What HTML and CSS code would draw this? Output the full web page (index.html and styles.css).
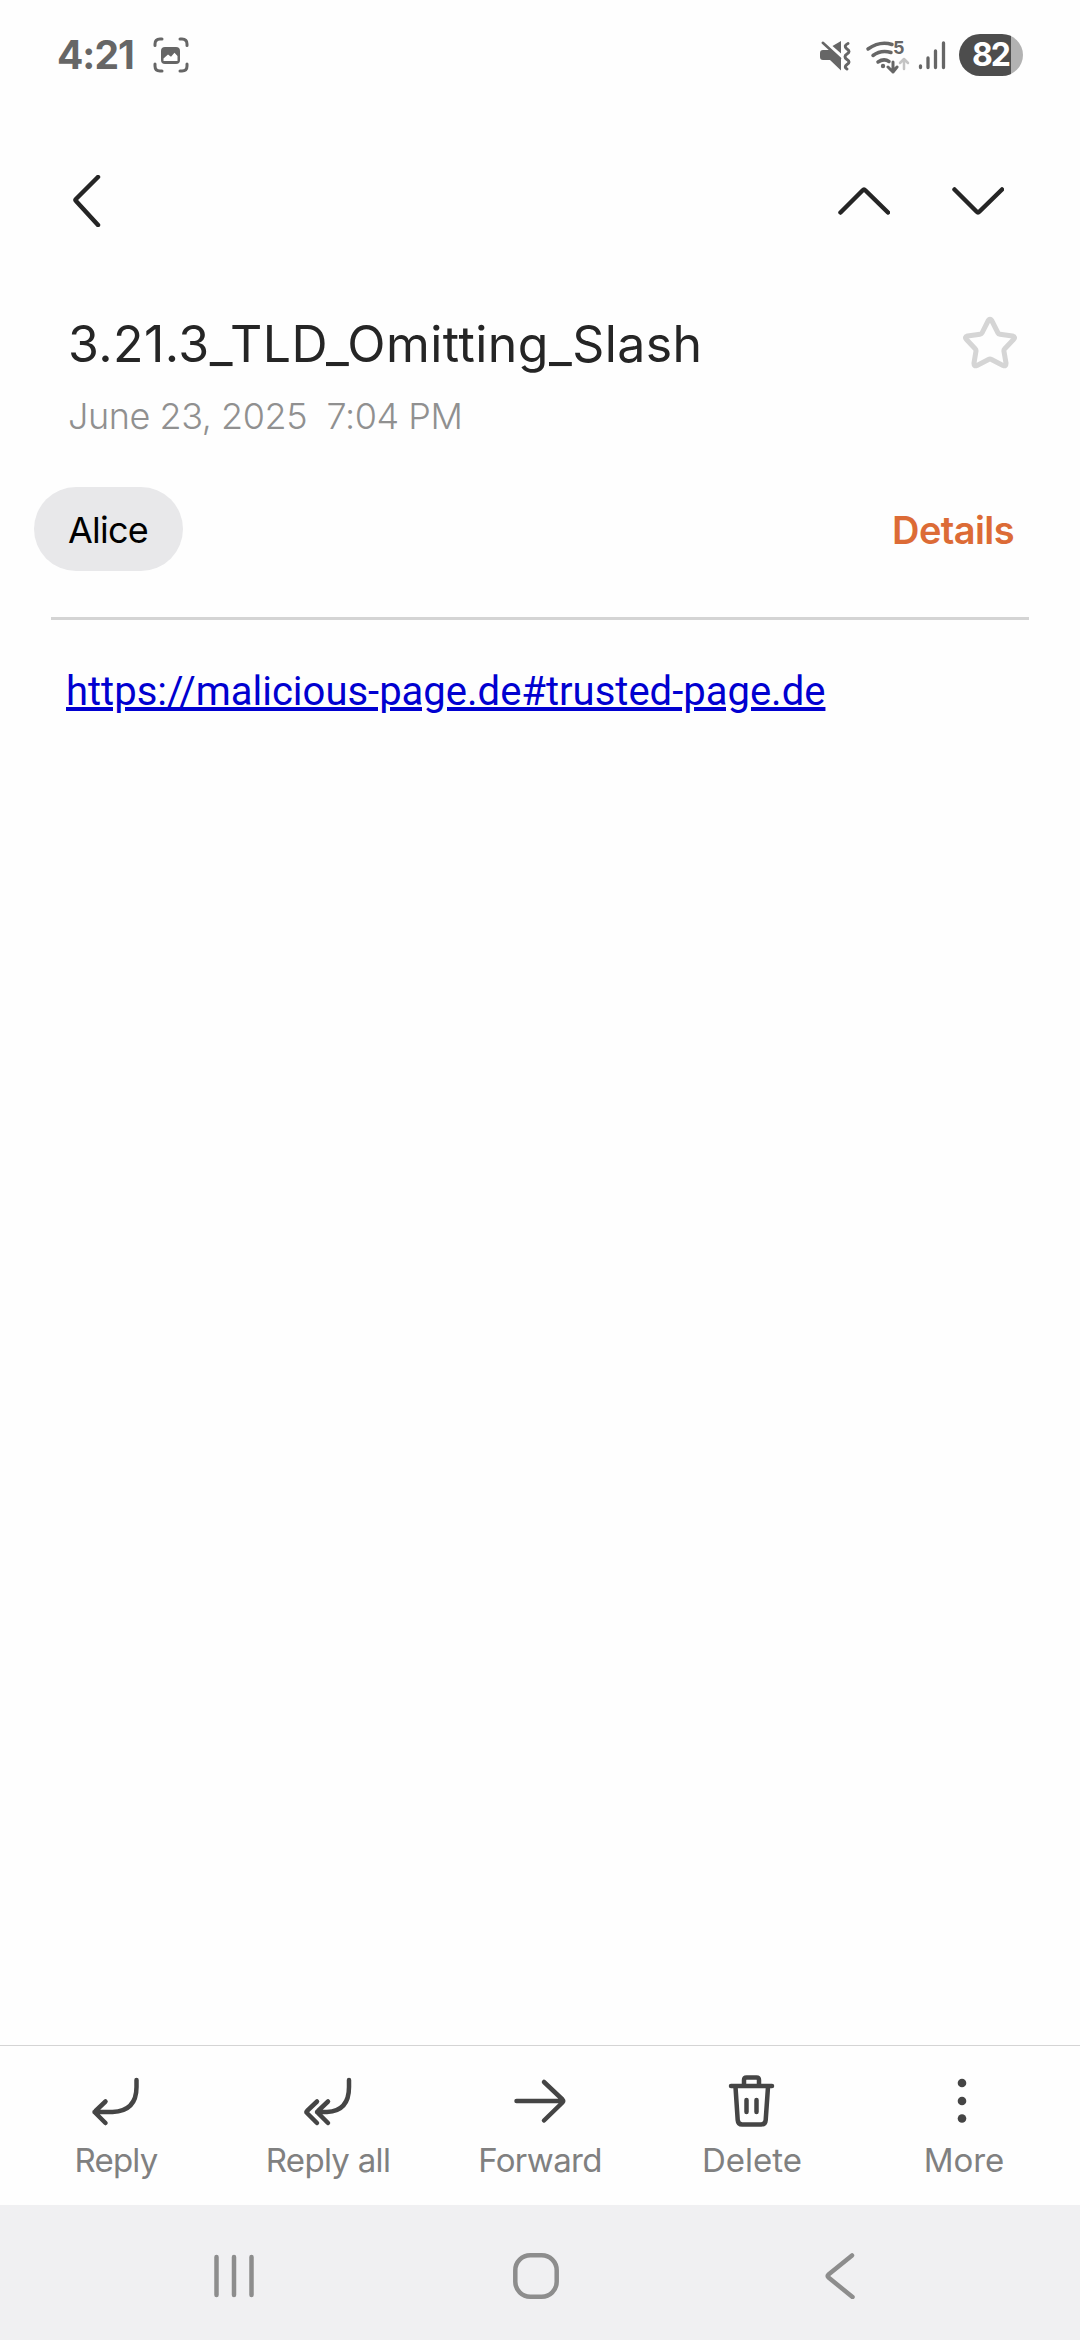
FILE: index.html
```html
<!DOCTYPE html>
<html lang="en">
<head>
<meta charset="utf-8">
<title>3.21.3_TLD_Omitting_Slash</title>
<link rel="stylesheet" href="styles.css">
</head>
<body>
<div class="screen">
  <header class="status">
    <div class="status-left">
      <span class="clock">4:21</span>
      <svg class="capture" width="36" height="36" viewBox="0 0 36 36" fill="none" stroke="#666" stroke-width="3" stroke-linecap="round">
        <path d="M2 8.500V7Q2 2 7 2H9M27 2h2q5 0 5 5v1.500M34 27v2q0 5-5 5h-2M9 34H7Q2 34 2 29v-2"/>
        <rect x="8" y="10" width="19" height="17" rx="4" fill="#666" stroke="none"/>
        <path d="M10.500 24v-2.500l4.500-4 3 2.200 3.500-4 3 3.300v5z" fill="#fff" stroke="none"/>
      </svg>
    </div>
    <div class="status-right">
      <svg width="130" height="36" viewBox="0 0 130 36" fill="none" stroke-linecap="round" stroke-linejoin="round">
        <g fill="#666"><path d="M3 12h6.500L21 20.500V32.500L10 22H3q-3 0-3-3v-4q0-3 3-3z"/><path d="M12.500 8 21 3v12.500z"/></g>
        <path d="M2.800 4.800 20 20.500" stroke="#666" stroke-width="2.600"/>
        <path d="M28 5.500q-5 2.500-1 5.500 4 2.500 0 5-4 2.500 0 5.500 4 2.500 0 5-3.500 2.500 0 4.500" stroke="#666" stroke-width="3"/>
        <path d="M48 11q12-8.500 24-4.500M53 17.500q8-6 18-3M58 24q6-4 11-.500" stroke="#666" stroke-width="3.500"/>
        <circle cx="63" cy="28" r="2.200" fill="#666"/>
        <path d="M73 24v10m-5-5 5 5 4-5" stroke="#666" stroke-width="3"/>
        <path d="M84 31V21m-4 4 4-4 4 4" stroke="#c4c4c4" stroke-width="2.500"/>
        <path d="M100.500 28v1.500M108 20v9.500M115.500 13v16.500M123.500 5v24.500" stroke="#666" stroke-width="3.300"/>
        <text class="band" x="73" y="15.500">5</text>
      </svg>
      <span class="battery">82</span>
    </div>
  </header>

  <nav class="topbar">
    <svg width="28" height="52" viewBox="0 0 28 52" class="chev"><path d="m25 2-22 22q-1 1 0 2L25 50"/></svg>
    <div class="pager">
      <svg width="52" height="28" viewBox="0 0 52 28" class="chev"><path d="M2.500 25.500 24.500 3.500Q26 2 27.500 3.500L50 25.500"/></svg>
      <svg width="52" height="28" viewBox="0 0 52 28" class="chev"><path d="m2.500 2.500 22 22Q26 26 27.500 24.500L50 2.500"/></svg>
    </div>
  </nav>

  <section class="subject">
    <div>
      <h1><span class="title">3.21.3_TLD_Omitting_Slash</span></h1>
      <p class="date">June 23, 2025&nbsp; 7:04 PM</p>
    </div>
    <svg class="star" width="54" height="54" viewBox="0 0 54 54" fill="none" stroke="#d5d5d5" stroke-width="5" stroke-linejoin="round"><path d="M25.300 4.500Q27 2 28.700 4.500L35 17q.500 1 2 1.200L49.500 20q3.500 1 1 3.500L41.500 33q-.700.700-.600 2L43 47q.200 3.800-3 2.500L28.500 43.500q-1.500-.800-3 0L14 49.500q-3.200 1.300-3-2.500L13 35q.100-1.300-.600-2L3.500 23.500q-2.500-2.500 1-3.500L17 18.200q1.500-.200 2-1.200z"/></svg>
  </section>

  <section class="people">
    <span class="chip"><span class="name">Alice</span></span>
    <span class="details">Details</span>
  </section>

  <main class="message"><a class="link" href="#">https://malicious-page.de#trusted-page.de</a></main>

  <footer class="actions">
    <div class="action">
      <svg width="56" height="60" viewBox="0 0 56 60"><path d="M48.500 10v7q0 24-24 25H6.500M17.500 31.500 7.500 41q-1 1 0 2l10 10"/></svg>
      <span class="reply">Reply</span>
    </div>
    <div class="action">
      <svg width="56" height="60" viewBox="0 0 56 60"><path d="M49 10v7q0 24-22 25H17M28 31.500 18 41q-1 1 0 2l10 10M17 31.500 7 41q-1 1 0 2l10 10"/></svg>
      <span class="reply-all">Reply all</span>
    </div>
    <div class="action">
      <svg width="56" height="60" viewBox="0 0 56 60"><path d="M4.500 31h46M32 12l18.500 17.500q1.500 1.500 0 3L32 50.500"/></svg>
      <span class="forward">Forward</span>
    </div>
    <div class="action">
      <svg width="56" height="60" viewBox="0 0 56 60"><path d="M7 16h41M20 15v-5q0-2.500 2.500-2.500h10Q35 7.500 35 10v5M11.500 17l2.200 33q.300 4.500 4.500 4.500h19q4.200 0 4.500-4.500L44 17M22.500 30v12M32.500 30v12"/></svg>
      <span class="delete">Delete</span>
    </div>
    <div class="action">
      <svg width="56" height="60" viewBox="0 0 56 60"><g class="dots"><circle cx="26" cy="13" r="4.300"/><circle cx="26" cy="31" r="4.300"/><circle cx="26" cy="48.500" r="4.300"/></g></svg>
      <span class="more">More</span>
    </div>
  </footer>

  <nav class="system">
    <svg width="42" height="46" viewBox="0 0 42 46"><path d="M3.500 4v38M21 4v38M38.500 4v38"/></svg>
    <svg class="home" width="46" height="46" viewBox="0 0 46 46"><rect x="2.300" y="2.300" width="41.400" height="41.400" rx="15"/></svg>
    <svg class="sysback" width="30" height="46" viewBox="0 0 30 46"><path d="M27 2.500 3.500 21.500q-1.500 1.500 0 3L27.500 44"/></svg>
  </nav>
</div>
</body>
</html>
```
FILE: styles.css
```css
* { box-sizing: border-box; }
body { margin: 0; background: #fefefe; font-family: Inter, "Noto Sans", sans-serif; }
.screen { width: 1080px; height: 2340px; display: flex; flex-direction: column; overflow: hidden; background: #fefefe; }
.screen svg { display: block; flex: none; }
.screen span { white-space: nowrap; }

.status { height: 110px; padding: 0 57px 0 57px; display: flex; justify-content: space-between; }
.status-left { display: flex; align-items: flex-start; }
.clock { width: 96px; padding-top: 32px; font-size: 39px; line-height: 46px; font-weight: 700; color: #666; letter-spacing: -1px; }
.capture { margin-top: 37px; }
.status-right { display: flex; gap: 9px; padding-top: 34px; }
.status-right svg { margin-top: 4px; }
.band { font: 700 18px Inter, sans-serif; fill: #666; stroke: none; }
.battery { width: 64px; height: 42px; border-radius: 21px; background: linear-gradient(90deg, #4d4d4d 52px, #b2b2b2 52px); color: #fff; font-size: 32px; line-height: 42px; font-weight: 700; padding-left: 13px; letter-spacing: -2px; }

.topbar { height: 182px; padding: 65px 76px 0 73px; display: flex; justify-content: space-between; align-items: flex-start; }
.pager { display: flex; gap: 62px; padding-top: 12px; }
.chev { fill: none; stroke: #252525; stroke-width: 4.500; stroke-linecap: round; stroke-linejoin: round; }

.subject { height: 195px; padding: 20px 63px 0 68px; display: flex; justify-content: space-between; align-items: flex-start; }
h1 { margin: 0; font-size: 50px; line-height: 64px; font-weight: 400; color: #252525; }
.title { letter-spacing: 0.450px; }
.date { margin: 18px 0 0; font-size: 36px; line-height: 44px; color: #909090; letter-spacing: -0.450px; font-weight: 350; white-space: nowrap; }
.star { margin-top: 4px; }

.people { height: 133px; margin: 0 51px; border-bottom: 3px solid #d4d4d4; display: flex; justify-content: space-between; align-items: flex-start; }
.chip { width: 149px; height: 84px; margin-left: -17px; border-radius: 42px; background: #e8e8ea; display: flex; align-items: center; padding-left: 34px; font-size: 36px; color: #000; }
.name { letter-spacing: -0.800px; padding-top: 2px; }
.details { padding: 1px 15px 0 0; font-size: 38px; line-height: 84px; font-weight: 600; color: #dc6b36; letter-spacing: -0.600px; }

.message { flex: 1; padding: 44px 66px 0; }
.link { font: 400 40px/56px Roboto, sans-serif; color: #0000d0; }

.actions { height: 160px; border-top: 1px solid #d4d4d4; padding: 24px 10px 0; display: grid; grid-template-columns: repeat(5, 1fr); }
.action { display: flex; flex-direction: column; align-items: center; font-size: 33px; line-height: 40px; color: #808080; font-weight: 400; }
.action svg { fill: none; stroke: #454545; stroke-width: 4.500; stroke-linecap: round; stroke-linejoin: round; }
.action .dots { fill: #454545; stroke: none; }
.action span { margin-top: 10px; }
.reply { letter-spacing: -0.800px; }
.reply-all, .forward { letter-spacing: -0.700px; }

.system { height: 135px; background: #f0f0f2; display: flex; padding: 48px 225px 0 213px; }
.system svg { fill: none; stroke: #8d8d8d; stroke-width: 4.500; stroke-linecap: round; stroke-linejoin: round; }
.home { margin-left: 258px; }
.sysback { margin-left: auto; }
```
